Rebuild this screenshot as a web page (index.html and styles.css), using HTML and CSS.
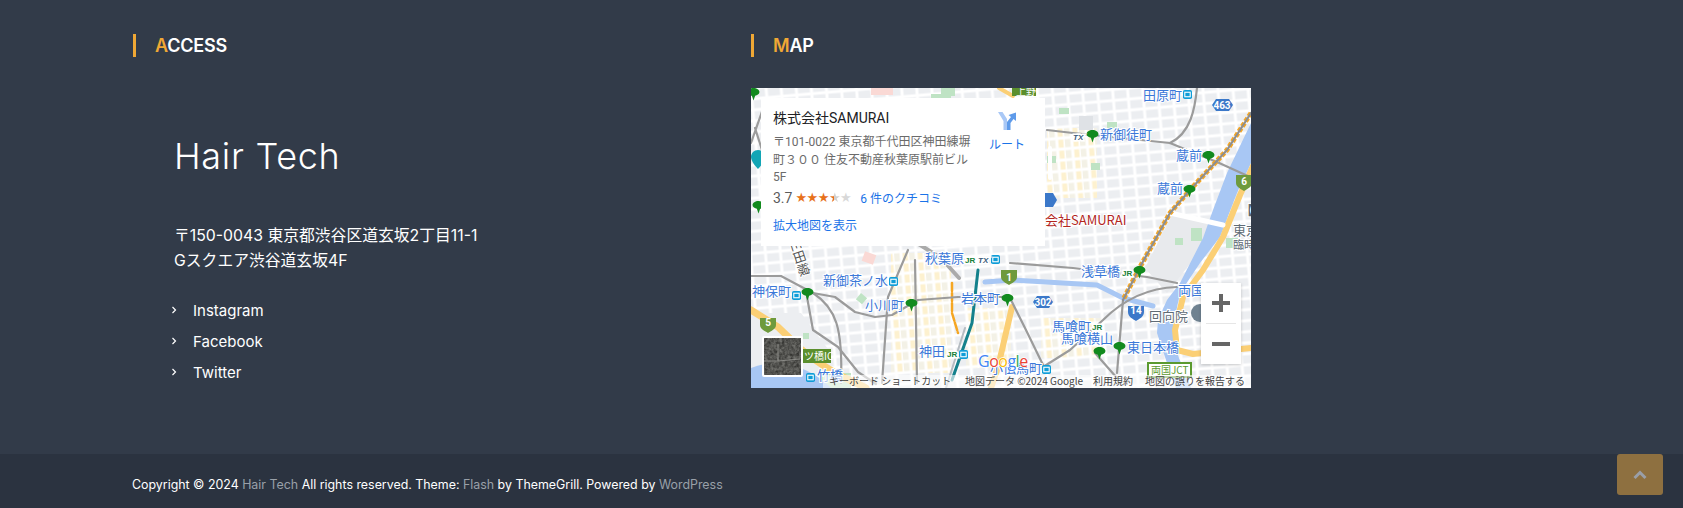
FILE: index.html
```html
<!DOCTYPE html>
<html lang="ja">
<head>
<meta charset="utf-8">
<title>Hair Tech</title>
<link rel="stylesheet" href="styles.css">
</head>
<body>
<section class="widgets">
  <div class="col col-access">
    <h3 class="heading"><span class="first">A</span>CCESS</h3>
    <div class="access-body">
      <h2 class="brand">Hair Tech</h2>
      <p class="address">〒150-0043 東京都渋谷区道玄坂2丁目11-1<br>Gスクエア渋谷道玄坂4F</p>
      <ul class="links">
        <li><svg class="chev" viewBox="0 0 6 8"><path d="M1.5 1l3 3-3 3"/></svg><a>Instagram</a></li>
        <li><svg class="chev" viewBox="0 0 6 8"><path d="M1.5 1l3 3-3 3"/></svg><a>Facebook</a></li>
        <li><svg class="chev" viewBox="0 0 6 8"><path d="M1.5 1l3 3-3 3"/></svg><a>Twitter</a></li>
      </ul>
    </div>
  </div>
  <div class="col col-map">
    <h3 class="heading"><span class="first">M</span>AP</h3>
    <div class="map">
      <svg class="map-canvas" viewBox="0 0 500 300" width="500" height="300">
        <defs>
          <pattern id="blocks" width="15" height="11" patternUnits="userSpaceOnUse" patternTransform="rotate(-5)">
            <rect width="15" height="11" fill="#fff"/>
            <rect x="1.5" y="1.5" width="12" height="8" fill="#eceef1"/>
          </pattern>
          <pattern id="warm" width="15" height="11" patternUnits="userSpaceOnUse" patternTransform="rotate(-5)">
            <rect width="15" height="11" fill="#fff"/>
            <rect x="1.5" y="1.5" width="5" height="8" fill="#fdf1cf"/>
            <rect x="8" y="1.5" width="5.500" height="8" fill="#f3f1e6"/>
          </pattern>
          <filter id="sat" x="0" y="0" width="100%" height="100%" color-interpolation-filters="sRGB">
            <feTurbulence type="fractalNoise" baseFrequency="0.35" numOctaves="3" seed="4"/>
            <feColorMatrix values="0 0 0 0 .2  0 0 0 0 .2  0 0 0 0 .19  1.200 1.200 0 0 -.75"/>
          </filter>
          <symbol id="tree" viewBox="0 0 12 12"><path d="M6 0C3 0 .5 1.600.5 3.800c0 2 2.300 3.200 4 3.400L6 11.500l1.500-4.300c1.700-.2 4-1.400 4-3.400C11.500 1.600 9 0 6 0z" fill="#128a1e"/></symbol>
          <symbol id="metro" viewBox="0 0 10 10"><rect width="10" height="10" rx="2" fill="#0f9dd8"/><rect x="2" y="2.500" width="6" height="5" fill="none" stroke="#fff" stroke-width="1.200"/></symbol>
        </defs>
        <rect width="500" height="300" fill="url(#blocks)"/>
        <!-- warm districts -->
        <rect x="140" y="165" width="60" height="120" fill="url(#warm)"/>
        <rect x="215" y="220" width="45" height="60" fill="url(#warm)"/>
        <rect x="290" y="230" width="60" height="40" fill="url(#warm)"/>
        <rect x="296" y="40" width="50" height="70" fill="url(#warm)"/>
        <!-- plain grey areas -->
        <path d="M422 125l44 12-20 30-30 38-22-25z" fill="#e8eaed"/>
        <path d="M0 225h50l30 40v35H0z" fill="#eceef1"/>
        <rect x="328" y="28" width="14" height="14" fill="#dfe2e6"/>
        <!-- parks -->
        <g fill="#bfe3c4">
          <rect x="308" y="20" width="10" height="6"/><rect x="356" y="34" width="10" height="6"/>
          <rect x="296" y="68" width="9" height="7"/><rect x="340" y="75" width="9" height="7"/>
          <rect x="440" y="140" width="11" height="13"/><rect x="424" y="150" width="8" height="7"/>
          <rect x="110" y="205" width="8" height="8" transform="rotate(40 110 205)"/>
          <rect x="52" y="245" width="6" height="6"/><rect x="20" y="14" width="8" height="4"/>
          <rect x="190" y="0" width="14" height="8"/><rect x="70" y="285" width="30" height="15"/>
          <rect x="475" y="150" width="12" height="10"/><rect x="180" y="6" width="20" height="4"/>
        </g>
        <rect x="112" y="165" width="12" height="10" fill="#fad9d5" transform="rotate(20 118 170)"/>
        <rect x="120" y="0" width="22" height="7" fill="#fad9d5"/>
        <!-- water -->
        <path d="M500 35L476 85 462 122 452 150 429 195 416 212 407 232 406 245 416 275 425 300H440L426 265 422 239 429 205 449 175 469 149 486 105 500 75Z" fill="#a8c7f4"/>
        <path d="M0 280C30 268 60 280 80 300H0Z" fill="#a8c7f4"/>
        <g fill="none" stroke-linecap="round" stroke-linejoin="round">
          <path d="M234 194L262 192 312 195 346 197 372 210 402 218" stroke="#a8c7f4" stroke-width="5"/>
          <!-- expressways -->
          <path d="M502 78L489 107 472 149 452 182 432 209 424 242 426 262 442 266 500 260" stroke="#fbcf75" stroke-width="6"/>
          <path d="M0 222L27 239 51 262C80 285 95 290 115 300" stroke="#fbcf75" stroke-width="7"/>
          <path d="M261 219L247 279 240 300" stroke="#fbcf75" stroke-width="6"/>
          <path d="M201 195V225L207 245" stroke="#f5a623" stroke-width="2.500" stroke-dasharray="8 2"/>
          <path d="M248 0L262 8" stroke="#fbcf75" stroke-width="4"/>
          <path d="M299 60V90" stroke="#fff" stroke-width="4"/>
          <path d="M419 125L472 137" stroke="#fff" stroke-width="5"/>
          <!-- rail: grey lines -->
          <g stroke="#9b9b9b" stroke-width="2.200">
            <path d="M296 42L322 45 419 55 436 62 466 74 499 89"/>
            <path d="M446 0C444 20 440 45 419 55"/>
            <path d="M0 188H30L62 205"/>
            <path d="M62 205L84 209 104 224 124 229 141 227 167 212 207 209 261 209"/>
            <path d="M56 209L62 242 87 259 107 284 125 296"/>
            <path d="M62 205C85 220 92 240 90 295"/>
            <path d="M157 162L137 209 131 295"/>
            <path d="M164 172L166 295"/>
            <path d="M259 175L322 180 396 189 426 195"/>
            <path d="M426 199C395 200 372 212 352 232L319 262 292 279"/>
            <path d="M372 212L366 285"/>
            <path d="M259 210L274 240 295 283"/>
            <path d="M344 265L366 290"/>
            <path d="M0 55L14 15M4 40L20 90"/>
          </g>
          <!-- main elevated rail -->
          <path d="M500 25L476 62 439 102 419 125 389 179 372 212" stroke="#f5a623" stroke-width="5" stroke-dasharray="4 2" stroke-linecap="butt"/>
          <path d="M500 25L476 62 439 102 419 125 389 179 372 212" stroke="#8f8f8f" stroke-width="2.200"/>
          <path d="M227 182L221 235 201 292" stroke="#14818c" stroke-width="3"/>
          <path d="M214 240L195 300" stroke="#b5bcc2" stroke-width="2"/>
          <path d="M166 155L190 170 208 190" stroke="#aaa" stroke-width="4"/>
        </g>
        <!-- labels -->
        <g class="lb">
          <text x="392" y="12">田原町</text>
          <text x="349" y="51">新御徒町</text>
          <text x="425" y="72">蔵前</text>
          <text x="406" y="105">蔵前</text>
          <text x="174" y="175">秋葉原</text>
          <text x="72" y="197">新御茶ノ水</text>
          <text x="1" y="208">神保町</text>
          <text x="114" y="222">小川町</text>
          <text x="210" y="215">岩本町</text>
          <text x="168" y="268">神田</text>
          <text x="239" y="285">小伝馬町</text>
          <text x="66" y="292">竹橋</text>
          <text x="330" y="188">浅草橋</text>
          <text x="427" y="207">両国</text>
          <text x="301" y="243">馬喰町</text>
          <text x="310" y="255">馬喰横山</text>
          <text x="376" y="264">東日本橋</text>
        </g>
        <g class="lb-gray">
          <text x="398" y="233">回向院</text>
          <text x="489" y="127">【</text>
          <text x="482" y="147">東京</text>
          <text class="lb-small" x="482" y="161">臨時</text>
          <text class="lb-rail" transform="translate(38 152) rotate(72)">三田線</text>
        </g>
        <text class="lb-red" x="294" y="137">会社SAMURAI</text>
        <!-- transit icons -->
        <g>
          <use href="#tree" x="335" y="42" width="13" height="13"/>
          <use href="#tree" x="451" y="63" width="13" height="13"/>
          <use href="#tree" x="432" y="97" width="13" height="13"/>
          <use href="#tree" x="50" y="200" width="13" height="13"/>
          <use href="#tree" x="154" y="211" width="13" height="13"/>
          <use href="#tree" x="250" y="206" width="13" height="13"/>
          <use href="#tree" x="382" y="178" width="13" height="13"/>
          <use href="#tree" x="342" y="259" width="13" height="13"/>
          <use href="#tree" x="362" y="254" width="13" height="13"/>
          <use href="#tree" x="-4" y="0" width="13" height="13"/>
          <use href="#tree" x="1" y="113" width="13" height="13"/>
          <use href="#metro" x="432" y="2" width="9" height="9"/>
          <use href="#metro" x="138" y="189" width="9" height="9"/>
          <use href="#metro" x="41" y="203" width="9" height="9"/>
          <use href="#metro" x="240" y="167" width="9" height="9"/>
          <use href="#metro" x="208" y="262" width="9" height="9"/>
          <use href="#metro" x="55" y="285" width="9" height="9"/>
          <use href="#metro" x="291" y="277" width="9" height="9"/>
          <text class="jr" x="214" y="175">JR</text>
          <text class="jr" x="196" y="269">JR</text>
          <text class="jr" x="371" y="188">JR</text>
          <text class="jr" x="341" y="242">JR</text>
          <text class="tx" x="227" y="175">TX</text>
          <text class="tx" x="322" y="52">TX</text>
        </g>
        <!-- pins -->
        <path d="M7 62c-4 0-7 3-7 7 0 5 7 12 7 12s7-7 7-12c0-4-3-7-7-7z" fill="#12a5b5"/>
        <circle cx="449" cy="225" r="9" fill="#6f8291"/>
        <!-- shields -->
        <g class="shield">
          <path d="M461 17l4-6h13l4 6-4 6h-13z" fill="#3b78c9"/><text x="471" y="21">463</text>
          <path d="M282 214l4-6h12l4 6-4 6h-12z" fill="#3b78c9"/><text x="292" y="218">302</text>
          <path d="M377 218h16v6c0 5-5 7-8 9-3-2-8-4-8-9z" fill="#3b78c9"/><text x="385" y="226">14</text>
          <path d="M290 105h12l4 7-4 7h-12z" fill="#3b78c9"/>
          <path d="M485 87h16v8c0 4-5 6-8 8-3-2-8-4-8-8z" fill="#6e9a3d"/><text x="493" y="97">6</text>
          <path d="M9 230h16v7c0 4-5 6-8 8-3-2-8-4-8-8z" fill="#6e9a3d"/><text x="17" y="238">5</text>
          <path d="M250 182h16v7c0 4-5 6-8 8-3-2-8-4-8-8z" fill="#6e9a3d"/><text x="258" y="193">1</text>
        </g>
        <rect x="261" y="0" width="24" height="8" fill="#5b8f2d"/>
        <text class="ic" x="265" y="7">上野</text>
        <rect x="50" y="261" width="30" height="14" fill="#5b8f2d"/>
        <text class="ic" x="53" y="272">ツ橋IC</text>
        <rect x="397" y="275" width="43" height="14" fill="#fff" stroke="#5b9a2f" stroke-width="2"/>
        <text class="jct" x="400" y="286">両国JCT</text>
        <!-- Google wordmark -->
        <text class="glogo" x="227" y="279"><tspan fill="#4285f4">G</tspan><tspan fill="#ea4335">o</tspan><tspan fill="#fbbc05">o</tspan><tspan fill="#4285f4">g</tspan><tspan fill="#34a853">l</tspan><tspan fill="#ea4335">e</tspan></text>
        <!-- attribution -->
        <rect x="72" y="287" width="428" height="13" fill="#fff" opacity=".6"/>
        <g class="attr">
          <text x="78" y="297">キーボード ショートカット</text>
          <text x="214" y="297">地図データ ©2024 Google</text>
          <text x="342" y="297">利用規約</text>
          <text x="394" y="297">地図の誤りを報告する</text>
        </g>
        <!-- satellite thumb -->
        <rect x="11" y="248" width="41" height="41" rx="2" fill="#fff"/>
        <rect x="13" y="250" width="37" height="37" fill="#6e6e6a"/>
        <rect x="13" y="250" width="37" height="37" filter="url(#sat)"/>
        <path d="M13 273h14l22-2M27 256v17" stroke="#8a8a86" fill="none"/>
      </svg>
      <div class="place-card">
        <div class="place-main">
          <div class="place-name">株式会社SAMURAI</div>
          <div class="place-addr">〒101-0022 東京都千代田区神田練塀<br>町３００ 住友不動産秋葉原駅前ビル<br>5F</div>
          <div class="place-rating"><span class="score">3.7</span><span class="stars"><span class="on">★★★</span><span class="half">★</span><span class="off">★</span></span><a class="reviews">6 件のクチコミ</a></div>
          <a class="larger">拡大地図を表示</a>
        </div>
        <div class="route">
          <svg class="route-icon" viewBox="0 0 22 22"><path d="M2 2h4.500l4.500 7v11H7.500V11z" fill="#a9c8f6"/><path d="M11 12l4-5-2.500-2L20 2.500V11l-2.500-2-3 4v7H11z" fill="#5f9bea"/></svg>
          <span>ルート</span>
        </div>
      </div>
      <div class="zoom-ctrl">
        <button class="zoom-btn" aria-label="zoom in"><svg viewBox="0 0 18 18" width="18" height="18"><path d="M7 0h4v7h7v4h-7v7H7v-7H0V7h7z" fill="#666"/></svg></button>
        <span class="zoom-sep"></span>
        <button class="zoom-btn" aria-label="zoom out"><svg viewBox="0 0 18 18" width="18" height="18"><rect y="7" width="18" height="4" fill="#666"/></svg></button>
      </div>
    </div>
  </div>
</section>
<footer class="site-footer">
  <p class="copyright">Copyright © 2024 <a>Hair Tech</a> All rights reserved. Theme: <a>Flash</a> by ThemeGrill. Powered by <a>WordPress</a></p>
</footer>
<a class="to-top" aria-label="top"><svg viewBox="0 0 14 10" width="14" height="10"><path d="M1.500 8L7 2.500 12.500 8" fill="none" stroke="#9a9fa8" stroke-width="3"/></svg></a>
</body>
</html>
```
FILE: styles.css
```css
* { box-sizing: border-box; }
html, body { margin: 0; padding: 0; height: 508px; overflow: hidden; }
body {
  background: #323b49;
  color: #fff;
  font-family: "Inter", "Noto Sans CJK JP", sans-serif;
  position: relative;
}
.widgets { display: flex; height: 454px; padding: 34px 0 0 133px; }
.col-access { width: 618px; }
.col-map { width: 500px; }
.heading {
  margin: 0;
  height: 23px;
  padding-left: 19px;
  border-left: 3px solid #f0a835;
  font-size: 18px;
  line-height: 23px;
  font-weight: 600;
  letter-spacing: -0.2px;
  color: #fff;
}
.first { color: #f0a835; }
.access-body { padding: 72px 0 0 41px; }
.brand {
  margin: 0;
  font-size: 36px;
  line-height: 54px;
  font-weight: 300;
  letter-spacing: 0.7px;
}
.address {
  margin: 40px 0 0;
  font-size: 15.800px;
  line-height: 25px;
  font-weight: 400;
}
.links { list-style: none; margin: 22px 0 0; padding: 0; }
.links li {
  display: flex;
  align-items: center;
  height: 31px;
  font-size: 15px;
  margin-left: -3px;
}
.chev { width: 6px; height: 8px; margin-right: 16px; margin-top: -2px; fill: none; stroke: #fff; stroke-width: 1.200; }
.map { position: relative; width: 500px; height: 300px; margin-top: 31px; overflow: hidden; background: #fff; }
.map-canvas { display: block; }
.lb text { font: 13px "Noto Sans CJK JP", sans-serif; fill: #3b78d8; paint-order: stroke; stroke: #fff; stroke-width: 2px; }
.lb-gray text { font: 13px "Noto Sans CJK JP", sans-serif; fill: #5f6b75; paint-order: stroke; stroke: #fff; stroke-width: 2px; }
.lb-gray .lb-small { font-size: 11px; }
.lb-gray .lb-rail { font-size: 13px; fill: #555; }
.lb-red { font: 13px "Noto Sans CJK JP", sans-serif; fill: #b3261e; paint-order: stroke; stroke: #fff; stroke-width: 2px; }
.jr { font: bold 8px "Liberation Sans", sans-serif; fill: #188038; paint-order: stroke; stroke: #fff; stroke-width: 3px; }
.tx { font: bold italic 8px "Liberation Sans", sans-serif; fill: #3a5a7a; paint-order: stroke; stroke: #fff; stroke-width: 3px; }
.shield text { font: bold 10px "Roboto", sans-serif; fill: #fff; text-anchor: middle; }
.ic { font: 10px "Noto Sans CJK JP", sans-serif; fill: #fff; }
.jct { font: 10px "Noto Sans CJK JP", sans-serif; fill: #5b9a2f; }
.glogo { font: 500 16px "Open Sans", sans-serif; letter-spacing: -0.5px; paint-order: stroke; stroke: #fff; stroke-width: 1.500px; }
.attr text { font: 10px "Noto Sans CJK JP", "Roboto", sans-serif; fill: #444; }
.place-card {
  position: absolute;
  left: 10px;
  top: 10px;
  width: 284px;
  height: 148px;
  display: flex;
  padding: 10px 12px;
  background: #fff;
  font-family: "Roboto", "Noto Sans CJK JP", sans-serif;
}
.place-main { width: 203px; flex: none; }
.place-name { font-size: 14px; line-height: 20px; font-weight: 400; color: #202124; }
.place-addr { margin-top: 6px; font-size: 12px; line-height: 17.500px; color: #6b6b6b; white-space: nowrap; }
.place-rating { display: flex; align-items: center; margin-top: 2px; height: 18px; font-size: 14px; color: #5b5b5b; }
.stars { margin-left: 3px; font-size: 13px; letter-spacing: -0.500px; font-family: "DejaVu Sans", sans-serif; white-space: nowrap; }
.on { color: #e7711b; }
.half { background: linear-gradient(90deg, #e7711b 50%, #d0d0d0 50%); -webkit-background-clip: text; background-clip: text; color: transparent; }
.off { color: #d8d8d8; }
.reviews { margin-left: 9px; font-size: 12px; color: #1a73e8; }
.larger { display: block; margin-top: 10px; font-size: 12px; line-height: 18px; color: #1a73e8; }
.route { display: flex; flex-direction: column; align-items: center; margin-left: 12px; width: 38px; font-size: 12px; color: #1a73e8; }
.route-icon { width: 22px; height: 22px; margin-top: 2px; margin-bottom: 3px; }
.zoom-ctrl {
  position: absolute;
  left: 450px;
  top: 195px;
  width: 40px;
  height: 81px;
  display: flex;
  flex-direction: column;
  align-items: center;
  background: #fff;
  box-shadow: 0 1px 3px rgba(0,0,0,.2);
}
.zoom-btn { width: 40px; height: 40px; padding: 0; border: 0; background: none; display: flex; align-items: center; justify-content: center; }
.zoom-sep { width: 30px; height: 1px; background: #e6e6e6; }
.site-footer { height: 54px; background: #2b3340; padding: 0 0 0 132px; }
.copyright { margin: 0; font-size: 12.400px; line-height: 62px; color: #fff; white-space: nowrap; }
.copyright a { color: #99a0a8; }
.to-top {
  position: absolute;
  left: 1617px;
  top: 454px;
  width: 46px;
  height: 41px;
  border-radius: 3px;
  background: #8e7040;
  display: flex;
  align-items: center;
  justify-content: center;
}
```
